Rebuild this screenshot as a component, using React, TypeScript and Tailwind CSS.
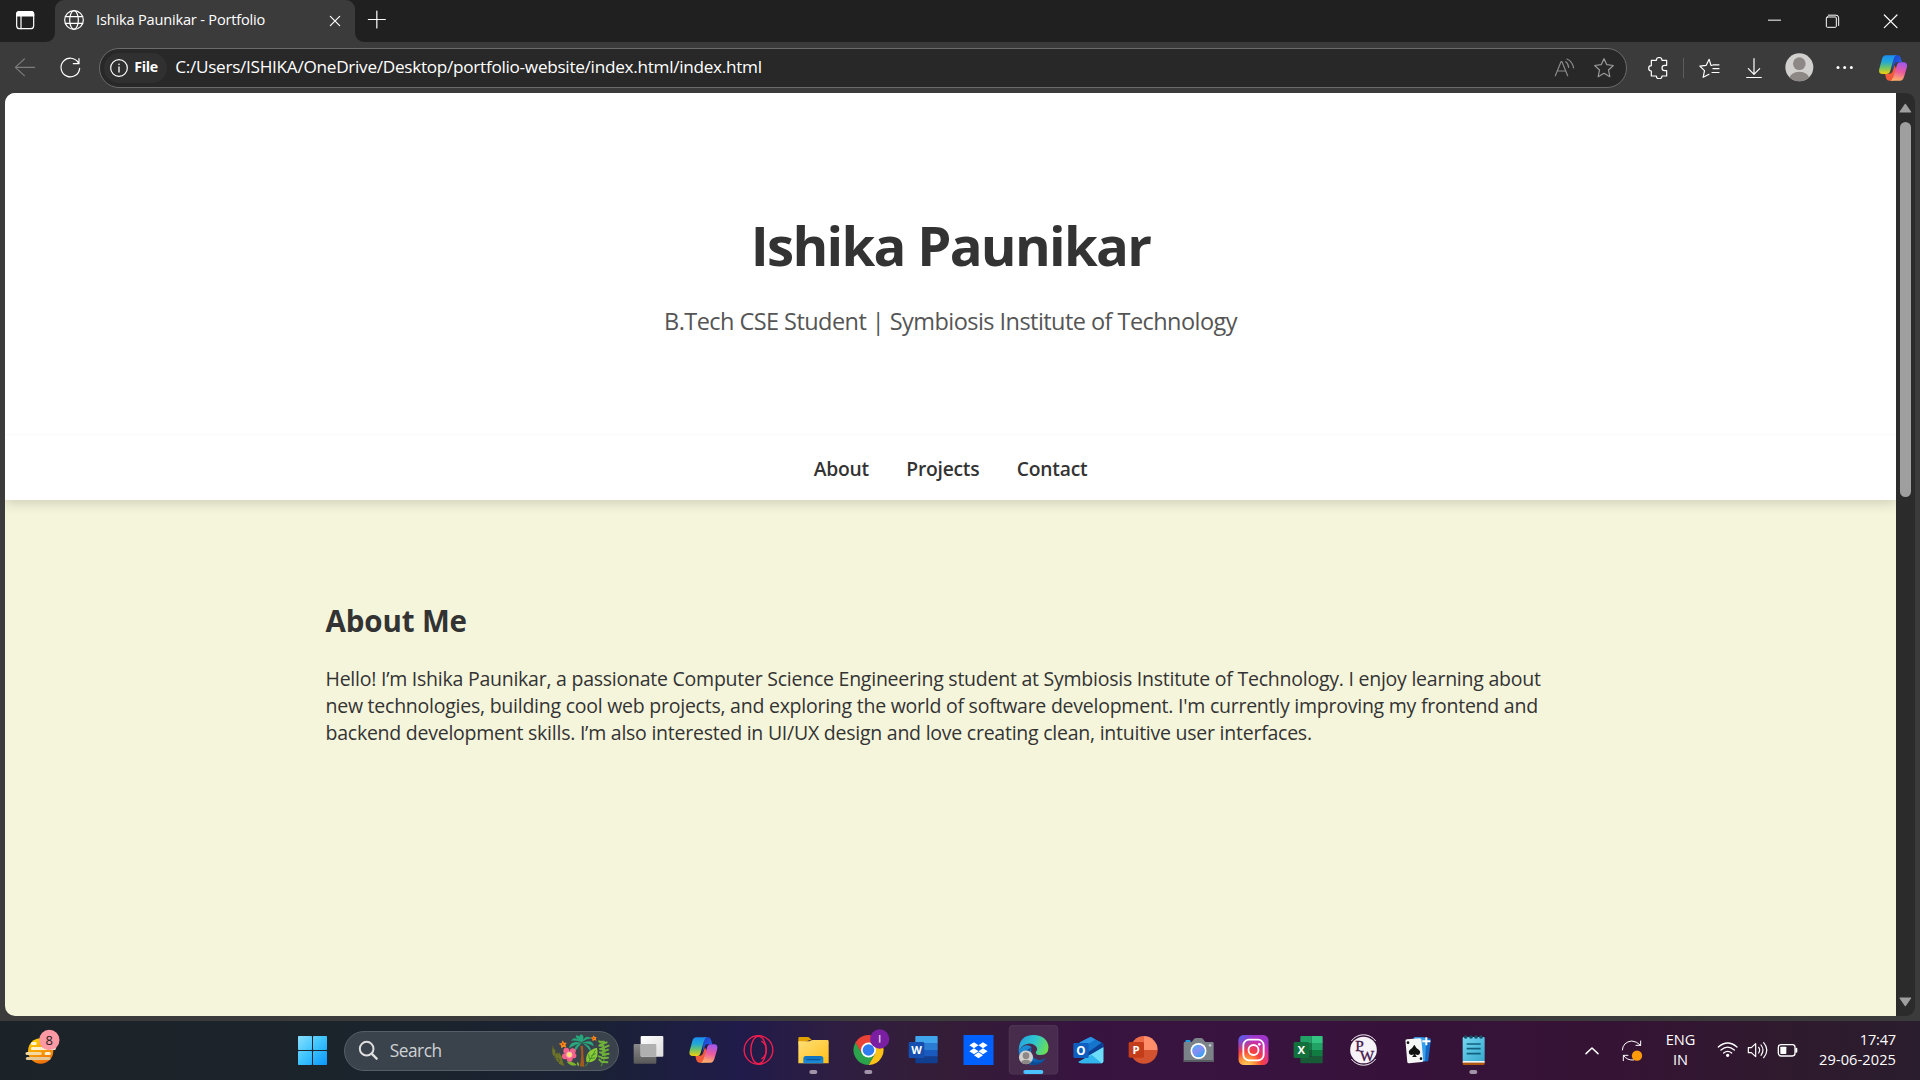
import type { ReactNode } from 'react';

const SANS = "font-['Open_Sans','Noto_Sans',sans-serif]";

/* Toolbar and tray drawings use a grid of three units per pixel. */
function Glyph({ box, className = '', children }: { box: [number, number, number, number]; className?: string; children: ReactNode }) {
  return (
    <svg
      width={box[2] / 3}
      height={box[3] / 3}
      viewBox={box.join(' ')}
      fill="none"
      stroke="currentColor"
      strokeWidth={3.6}
      strokeLinecap="round"
      strokeLinejoin="round"
      className={`shrink-0 ${className}`}
    >
      {children}
    </svg>
  );
}

function TabStrip() {
  return (
    <div className="flex h-[42px] shrink-0 bg-[#3b3b3b] text-white">
      <div className="flex w-[55px] items-center rounded-br-[9px] bg-[#202020] pl-[15px]">
        <Glyph box={[45, 30, 60, 60]} className="-mt-0.5">
          <rect x="50" y="35" width="51" height="51" rx="9" />
          <path d="M50 48V42q0-7 8-7h36q7 0 7 7v6z" fill="currentColor" />
          <path d="M63 48v38" />
        </Glyph>
      </div>
      <div className="w-[300px] bg-[#202020]">
        <div className="flex h-full items-center rounded-t-[9px] bg-[#3b3b3b] pr-[14px] pl-2">
          <Glyph box={[189, 27, 66, 66]} className="-mt-0.5">
            <circle cx="222" cy="60" r="28" />
            <ellipse cx="222" cy="60" rx="13" ry="28" />
            <path d="M196 50h52M196 70h52" />
          </Glyph>
          <span className="mt-[-3px] ml-[11px] text-[14.6px] tracking-[-0.19px]">Ishika Paunikar - Portfolio</span>
          <Glyph box={[989, 45, 36, 36]} className="ml-auto">
            <path d="M993 49l28 28M1021 49l-28 28" />
          </Glyph>
        </div>
      </div>
      <div className="flex flex-1 items-center rounded-bl-[9px] bg-[#202020] pl-3">
        <Glyph box={[1101, 30, 60, 60]} className="-mt-0.5">
          <path d="M1105 58.500h51M1130.500 33v51" />
        </Glyph>
        <Glyph box={[801, 40, 51, 50]} className="ml-auto">
          <path d="M807 61.500h39" strokeLinecap="butt" strokeWidth="3" />
        </Glyph>
        <Glyph box={[975, 40, 51, 50]} className="ml-[41px]">
          <g strokeWidth="3">
            <rect x="982" y="52" width="30" height="31" rx="3" />
            <path d="M988 46.500h23q8 0 8 8v23" />
          </g>
        </Glyph>
        <Glyph box={[1148, 40, 51, 50]} className="mr-[21px] ml-[41px]">
          <path d="M1155 46l38 38M1193 46l-38 38" strokeWidth="3.600" />
        </Glyph>
      </div>
    </div>
  );
}

function CopilotMark({ id }: { id: string }) {
  return (
    <g stroke="none">
      <defs>
        <linearGradient id={`${id}a`} x1="0" y1="0" x2="0" y2="1">
          <stop offset="0" stopColor="#1c8df0" />
          <stop offset=".35" stopColor="#22a8d8" />
          <stop offset=".65" stopColor="#6cc36b" />
          <stop offset="1" stopColor="#f3cf0c" />
        </linearGradient>
        <linearGradient id={`${id}b`} x1=".6" y1="0" x2=".4" y2="1">
          <stop offset="0" stopColor="#a156f0" />
          <stop offset=".5" stopColor="#ec5b9c" />
          <stop offset="1" stopColor="#ffb26a" />
        </linearGradient>
        <linearGradient id={`${id}c`} x1="0" y1="0" x2="1" y2="1">
          <stop offset="0" stopColor="#1b3fc9" />
          <stop offset="1" stopColor="#2b6dee" />
        </linearGradient>
      </defs>
      <path d="M44 1h12q7 0 9 7l4 14H54q-6 0-8 7l-7 20z" fill={`url(#${id}c)`} />
      <path d="M42 77H30q-7 0-9-8l-3-13h14q7 0 9-7l6-18 9 24z" fill="#f25b3a" />
      <path d="M21 1h32q-6 1-9 11L34 47q-3 10-12 10H11Q-3 57 1 41L9 12Q12 1 21 1z" fill={`url(#${id}a)`} />
      <path d="M63 77H33q7-1 10-11l10-34q3-10 12-10h9q14 0 9 17l-8 27q-3 11-12 11z" fill={`url(#${id}b)`} />
    </g>
  );
}

function Toolbar() {
  return (
    <div className="flex h-[51px] shrink-0 items-center bg-[#3b3b3b] text-white">
      <Glyph box={[42, 172, 66, 62]} className="ml-[14px] text-[#7c7c7c]">
        <path d="M104 203H47M73 178l-27 25 27 25" />
      </Glyph>
      <Glyph box={[176, 170, 68, 68]} className="mt-px ml-[22.500px]">
        <path d="M234 187A28 28 0 1 0 238 204M236 175v15h-17" />
      </Glyph>
      <div className="ml-[18px] flex h-[40px] w-[1528px] items-center rounded-full border border-[#6b6b6b] bg-[#282828] pl-1">
        <div className="flex h-[30px] w-[63px] items-center rounded-full bg-[#303030] pl-[5px]">
          <Glyph box={[329, 174, 60, 60]}>
            <circle cx="359" cy="204" r="25" />
            <path d="M359 201v15" strokeWidth="4" />
            <circle cx="359" cy="193" r="2.500" fill="currentColor" stroke="none" />
          </Glyph>
          <span className="-mt-px ml-[5px] text-[14.2px] font-bold tracking-[-0.300px]">File</span>
        </div>
        <span className="mt-[-1px] ml-2 text-[17.200px] tracking-[-0.290px] whitespace-nowrap">
          C:/Users/ISHIKA/OneDrive/Desktop/portfolio-website/index.html/index.html
        </span>
        <Glyph box={[165, 170, 63, 63]} className="ml-auto text-[#8a8a8a]">
          <path d="M169 226l17-42h3l17 42M175 212h24" />
          <path d="M200 184q8 5 9 17M204 176q16 7 20 27" />
        </Glyph>
        <Glyph box={[282, 173, 66, 66]} className="mr-[11px] ml-[18px] text-[#9a9a9a]">
          <path d="M315 178l8.500 18 19.500 2.500-14.500 13.500 4 20-17.500-10-17.500 10 4-20-14.500-13.500 19.500-2.500z" />
        </Glyph>
      </div>
      <Glyph box={[447, 171, 66, 66]} className="ml-[21px]">
        <path d="M457 181h15a8.500 8.500 0 0 1 17 0h14v15h-6a8 8 0 0 0 0 16h6v16h-14a8.500 8.500 0 0 1-17 0h-15v-15a8 8 0 0 1 0-16z" />
      </Glyph>
      <div className="ml-[13px] h-5 w-px bg-[#5c5c5c]" />
      <Glyph box={[596, 171, 69, 66]} className="ml-[14px]">
        <path d="M635 196l-5.500-18-9 18-19 2.500 14 13.500-4 20 17.500-9M635 196h3M641 194.500h18M641 206h18M638 217.500h21" />
      </Glyph>
      <Glyph box={[738, 171, 54, 66]} className="ml-[24px]">
        <path d="M765 176v46M748 206l17 17 17-17M743 232.500h44" />
      </Glyph>
      <Glyph box={[857, 161, 86, 86]} className="ml-[22px]">
        <g stroke="none">
          <clipPath id="avatar">
            <circle cx="900" cy="204" r="42" />
          </clipPath>
          <circle cx="900" cy="204" r="42" fill="#d2d0ce" />
          <g clipPath="url(#avatar)" fill="#8d8885">
            <circle cx="900" cy="193" r="19" />
            <ellipse cx="900" cy="240" rx="31" ry="23" />
          </g>
        </g>
      </Glyph>
      <Glyph box={[1008, 190, 54, 27]} className="ml-[22px]">
        <g fill="currentColor" stroke="none">
          <circle cx="1014" cy="203.500" r="4.500" />
          <circle cx="1034" cy="203.500" r="4.500" />
          <circle cx="1054" cy="203.500" r="4.500" />
        </g>
      </Glyph>
      <Glyph box={[0, 0, 86, 78]} className="ml-[25px]">
        <CopilotMark id="bar" />
      </Glyph>
    </div>
  );
}

function Page() {
  return (
    <div className="flex h-[928px] shrink-0 bg-[#3b3b3b] pr-[5px] pl-[5px]">
      <div className="flex h-[923px] w-[1891px] flex-col overflow-hidden rounded-l-[10px] bg-[#f5f5dc] text-[#333]">
        <header className="relative z-10 flex h-[341px] shrink-0 flex-col items-center bg-white pt-[114px]">
          <h1 className="text-[54.500px] leading-[76px] font-bold tracking-[-1.720px]">Ishika Paunikar</h1>
          <p className="mt-[21px] text-[23.500px] leading-[34px] tracking-[-0.550px] text-[#555]">
            B.Tech CSE Student | Symbiosis Institute of Technology
          </p>
        </header>
        <nav className="relative flex h-[66px] shrink-0 items-center justify-center gap-[37.500px] border-t border-[#fafafa] bg-white pt-[3px] text-[19.300px] font-semibold tracking-[-0.250px] shadow-[0_3px_12px_rgba(0,0,0,0.16)]">
          <a>About</a>
          <a>Projects</a>
          <a>Contact</a>
        </nav>
        <section className="ml-[320.500px] pt-[101px]">
          <h2 className="text-[29.500px] leading-[40px] font-bold tracking-[-0.120px]">About Me</h2>
          <p className="mt-[24px] text-[19.500px] leading-[27px] tracking-[-0.242px] whitespace-nowrap">
            Hello! I’m Ishika Paunikar, a passionate Computer Science Engineering student at Symbiosis Institute of Technology. I enjoy learning about
            <br />
            new technologies, building cool web projects, and exploring the world of software development. I'm currently improving my frontend and
            <br />
            backend development skills. I’m also interested in UI/UX design and love creating clean, intuitive user interfaces.
          </p>
        </section>
      </div>
      <div className="flex h-[923px] w-[19px] flex-col items-center rounded-r-[9px] bg-[#2b2b2b] pt-[10px] pb-[9px]">
        <Glyph box={[0, 0, 38, 30]} className="text-[#9f9f9f]">
          <path d="M19 4L35 27H3z" fill="currentColor" />
        </Glyph>
        <div className="mt-[9px] h-[375px] w-[11px] rounded-full bg-[#9f9f9f]" />
        <Glyph box={[0, 0, 38, 30]} className="mt-auto text-[#9f9f9f]">
          <path d="M19 26L35 3H3z" fill="currentColor" />
        </Glyph>
      </div>
    </div>
  );
}

/* One taskbar slot: 165 x 177 units, icon centred on (82.5, 87). */
function Slot({ active, running, children }: { active?: boolean; running?: boolean; children: ReactNode }) {
  return (
    <svg width="55" height="59" viewBox="0 0 165 177" className={`shrink-0 ${SANS}`}>
      {active && <rect x="9" y="13" width="147" height="147" rx="12" fill="#fff" fillOpacity=".09" stroke="#fff" strokeOpacity=".1" strokeWidth="2" />}
      {children}
      {active && <rect x="52" y="147" width="60" height="12" rx="6" fill="#4cc2ff" />}
      {running && <rect x="70" y="147" width="24" height="12" rx="6" fill="#a193a8" />}
    </svg>
  );
}

function StartIcon() {
  return (
    <Slot>
      <defs>
        <linearGradient id="win" gradientUnits="userSpaceOnUse" x1="38" y1="44" x2="126" y2="132">
          <stop offset="0" stopColor="#8be0ff" />
          <stop offset=".5" stopColor="#3cc3fd" />
          <stop offset="1" stopColor="#0a95fb" />
        </linearGradient>
      </defs>
      <g fill="url(#win)">
        <rect x="39" y="45" width="42" height="42" rx="2" />
        <rect x="84" y="45" width="42" height="42" rx="2" />
        <rect x="39" y="90" width="42" height="42" rx="2" />
        <rect x="84" y="90" width="42" height="42" rx="2" />
      </g>
    </Slot>
  );
}

function SearchPill() {
  return (
    <div className="flex h-10 w-[275px] items-center rounded-full border border-[#555e67] bg-[#3a424b] pl-[13px]">
      <Glyph box={[234, 90, 62, 62]} className="text-[#dedede]">
        <g strokeWidth="6">
          <circle cx="260" cy="116" r="20.500" />
          <path d="M275 131l15 15" strokeWidth="7" />
        </g>
      </Glyph>
      <span className="mt-px ml-[11px] text-[17.300px] tracking-[-0.450px] text-[#cfd2d5]">Search</span>
      <svg width="60" height="34" viewBox="812 70 180 102" className="mb-px mr-2 ml-auto">
        <g strokeLinecap="round" fill="none">
          <path d="M820 110q6 40 34 58" stroke="#5c5a22" strokeWidth="4" />
          <path d="M820 114q-4 18 4 26l10-12zM828 120l14 22-14 6zM838 126l12 18-12 14zM822 140l14 18 8-6zM846 138l8 30-16-6z" fill="#6d7427" />
          <path d="M958 92q34 30 8 76" stroke="#4f8a2c" strokeWidth="4" />
          <path d="M960 96h14M962 106l20-8M968 116l20-8M970 126l16-6M970 136l18-4M968 146l18-2M966 156l18 2M972 108l-12 0M974 120l-12-2M974 132l-12-4M970 144l-12-4M966 156l-6-6" stroke="#71b33a" strokeWidth="6" />
        </g>
        <path d="M903 108q6 30-2 62l14 1q-3-32-4-62z" fill="#a05a20" />
        <g fill="#27a77c">
          <path d="M907 98q-20-22-32-5 18-2 32 5z" />
          <path d="M907 100q-34-10-38 16 18-12 38-16z" />
          <path d="M907 100q-26 6-20 26 8-14 20-26z" />
          <path d="M907 100q-14-28 2-25 8 8-2 25z" />
          <path d="M907 98q12-26 30-12-16 2-30 12z" />
          <path d="M907 100q34-14 36 10-16-10-36-10z" />
          <path d="M907 100q32 6 26 26-10-18-26-26z" />
          <path d="M907 98q-26-20-14-21 12 2 14 21z" />
        </g>
        <path d="M921 156q-4-34 32-42 8 38-22 44z" fill="#8ccb35" />
        <path d="M918 170q14-16 30-48M930 148l18-4M936 138l14-6M930 148l-2-14" stroke="#3f8f2e" strokeWidth="3" fill="none" />
        <path d="M862 156q14-4 30 10-16 6-30-10zM894 156q8 6 4 14-8-6-4-14z" fill="#7fb32e" />
        <g fill="#f4628b">
          <ellipse cx="861" cy="123" rx="9" ry="9" />
          <ellipse cx="880" cy="125" rx="9" ry="9" />
          <ellipse cx="857" cy="140" rx="9" ry="9" />
          <ellipse cx="871" cy="147" rx="9" ry="9" />
          <ellipse cx="883" cy="138" rx="8" ry="8" />
        </g>
        <circle cx="870" cy="135" r="8" fill="#ffe36b" stroke="#ffb3c6" strokeWidth="3" />
        <g fill="#ff8f1c">
          <path d="M850 92l4 7 8 0-4 7 3 8-8-3-7 5-1-9-7-5 9-2z" />
          <path d="M943 77l3 5 6 0-3 5 3 6-7-2-5 4-1-7-6-4 7-1z" />
        </g>
        <circle cx="850" cy="104" r="3" fill="#c8430b" />
        <circle cx="943" cy="86" r="2.500" fill="#c8430b" />
      </svg>
    </div>
  );
}

function TaskViewIcon() {
  return (
    <Slot>
      <defs>
        <linearGradient id="tv1" x1="0" y1="0" x2="1" y2="1">
          <stop offset="0" stopColor="#fff" />
          <stop offset="1" stopColor="#dcdcdc" />
        </linearGradient>
        <linearGradient id="tv2" x1="0" y1="0" x2="0" y2="1">
          <stop offset="0" stopColor="#8a8a8a" />
          <stop offset="1" stopColor="#585858" />
        </linearGradient>
      </defs>
      <rect x="38" y="69" width="68" height="59" rx="3" fill="url(#tv2)" />
      <rect x="59" y="45" width="68" height="62" rx="3" fill="url(#tv1)" />
      <path d="M59 69h44q3 0 3 3v35H62q-3 0-3-3z" fill="#b0b0b0" />
    </Slot>
  );
}

function CopilotIcon() {
  return (
    <Slot>
      <g transform="translate(40 48)">
        <CopilotMark id="task" />
      </g>
    </Slot>
  );
}

function OperaIcon() {
  return (
    <Slot>
      <g fill="none" stroke="#fa1e4e" strokeWidth="4">
        <circle cx="82.500" cy="87" r="43" />
        <ellipse cx="82.500" cy="87" rx="23" ry="41" />
        <path d="M91 60q15 9 15 27t-15 27" strokeWidth="3.500" />
      </g>
    </Slot>
  );
}

function FolderIcon() {
  return (
    <Slot running>
      <defs>
        <linearGradient id="fold" x1="0" y1="0" x2="1" y2="1">
          <stop offset="0" stopColor="#ffe079" />
          <stop offset="1" stopColor="#ffbe18" />
        </linearGradient>
        <linearGradient id="foldb" x1="0" y1="0" x2="0" y2="1">
          <stop offset="0" stopColor="#0f6fbd" />
          <stop offset="1" stopColor="#1c8fdd" />
        </linearGradient>
      </defs>
      <path d="M37 52q0-4 4-4h24q4 0 6 3l7 7h-8l-33 12z" fill="#e0a100" />
      <path d="M37 61h30q4 0 7-2 3-2 7-2h43q4 0 4 4v66H37z" fill="url(#fold)" />
      <path d="M52 127v-14q0-8 8-8h44q8 0 8 8v14z" fill="url(#foldb)" />
      <path d="M62 116h40" stroke="#0a4c8b" strokeWidth="3" />
    </Slot>
  );
}

function ChromeIcon() {
  return (
    <Slot running>
      <path d="M82.500 87L43.500 64.500A45 45 0 0 1 121.500 64.500H82.500z" fill="#ea4335" />
      <path d="M82.500 87L121.500 64.500H82.500L102 98.300 82.500 132A45 45 0 0 0 121.500 64.500z" fill="#fbc116" />
      <path d="M43.500 64.500A45 45 0 0 0 82.500 132L102 98.300 82.500 87 63 98.300z" fill="#2ba24c" />
      <path d="M43.500 64.500L63 98.300 82.500 64.500z" fill="#2ba24c" />
      <path d="M43.500 64.500L60 93 82.500 64.500 82.500 50z" fill="#ea4335" />
      <circle cx="82.500" cy="87" r="22.500" fill="#fff" />
      <circle cx="82.500" cy="87" r="17.500" fill="#2f7bf0" />
      <circle cx="116" cy="54" r="29" fill="#7b1fa2" />
      <path d="M116 42v23" stroke="#d9b5e6" strokeWidth="5" />
    </Slot>
  );
}

function Letter({ x, y, size, children, fill = '#fff' }: { x: number; y: number; size: number; children: ReactNode; fill?: string }) {
  return (
    <text x={x} y={y} fontSize={size} fontWeight="700" textAnchor="middle" fill={fill}>
      {children}
    </text>
  );
}

function WordIcon() {
  return (
    <Slot>
      <path d="M58 48q0-3 3-3h61q3 0 3 3v18H58z" fill="#41a5ee" />
      <path d="M58 66h67v21H58z" fill="#2b7cd3" />
      <path d="M58 87h67v20H58z" fill="#185abd" />
      <path d="M58 107h67v17q0 3-3 3H61q-3 0-3-3z" fill="#103f91" />
      <rect x="38" y="63" width="47" height="48" rx="4" fill="#164fb0" />
      <Letter x={61.500} y={98} size={33}>W</Letter>
    </Slot>
  );
}

function DropboxIcon() {
  return (
    <Slot>
      <rect x="37.500" y="42" width="90" height="90" fill="#0061fe" />
      <g fill="#fff">
        <path d="M69 64l13.500 9-13.500 9-14-9zM96 64l14 9-14 9-13.500-9zM69 82l13.500 9-13.500 9-14-9zM96 82l14 9-14 9-13.500-9zM82.500 94l13.500 8.500-13.500 9-13.500-9z" />
      </g>
    </Slot>
  );
}

function EdgeIcon() {
  return (
    <Slot active>
      <defs>
        <linearGradient id="edA" x1="0" y1=".3" x2="1" y2=".6">
          <stop offset="0" stopColor="#25a5e0" />
          <stop offset=".5" stopColor="#2fc6cf" />
          <stop offset="1" stopColor="#6cdf4e" />
        </linearGradient>
        <linearGradient id="edB" x1="0" y1="0" x2=".6" y2="1">
          <stop offset="0" stopColor="#1e9ae0" />
          <stop offset="1" stopColor="#0d57a8" />
        </linearGradient>
      </defs>
      <path d="M38 87A45 45 0 0 0 82 132q24 0 38-21-12 8-25 5-24-6-19-38-16-14-38 9z" fill="url(#edB)" />
      <path d="M76 80q-14 20 2 40 14 12 38-4-14 17-34 16-24-4-26-26-1-18 20-26z" fill="#0c4a92" />
      <path d="M38 87q2-45 45-45 42 2 44.500 37 0 23-23 23-15 0-15-7 0-3 4-8 1-12-14-18-22-6-41.500 18z" fill="url(#edA)" />
      <clipPath id="edC">
        <circle cx="60" cy="109" r="21" />
      </clipPath>
      <g clipPath="url(#edC)">
        <rect x="39" y="88" width="42" height="42" fill="#d2d0ce" />
        <circle cx="60" cy="104" r="10" fill="#8d8885" />
        <ellipse cx="60" cy="127" rx="16" ry="11" fill="#8d8885" />
      </g>
    </Slot>
  );
}

function OutlookIcon() {
  return (
    <Slot>
      <path d="M50 68l36-19q3-2 6 0l33 18q2 1 2 4v20H50z" fill="#0f5fb5" />
      <path d="M56 64l30-15q3-2 6 0l12 7-50 30z" fill="#2b93e6" />
      <path d="M104 56l18 9-52 38-16-17z" fill="#1575cd" />
      <path d="M122 65q5 3 5 6v8L82 108l-12-6z" fill="#0c3f94" />
      <path d="M127 79v42q0 6-6 6H62q-6 0-10-4l25-14z" fill="#39c4f3" />
      <path d="M127 79v42q0 6-6 6L80 106z" fill="#6ddcf8" />
      <path d="M52 123l40-22 30 26H62z" fill="#32b4ec" />
      <rect x="37" y="66" width="46" height="45" rx="4" fill="#0f5fc0" />
      <Letter x={60} y={101} size={35}>O</Letter>
    </Slot>
  );
}

function PowerPointIcon() {
  return (
    <Slot>
      <path d="M84 87V45a41.500 41.500 0 0 0-41 42z" fill="#ed6c47" />
      <path d="M84 87V45a41.500 41.500 0 0 1 41 42z" fill="#ff8f6b" />
      <path d="M43 87h82a41 41 0 0 1-82 0z" fill="#d35230" />
      <rect x="38" y="63" width="46" height="47" rx="4" fill="#c33d1b" />
      <Letter x={60} y={99} size={34}>P</Letter>
    </Slot>
  );
}

function CameraIcon() {
  return (
    <Slot>
      <defs>
        <linearGradient id="lens" x1="0" y1="0" x2=".7" y2="1">
          <stop offset="0" stopColor="#37b6f3" />
          <stop offset=".5" stopColor="#8a8cf5" />
          <stop offset="1" stopColor="#30a5f0" />
        </linearGradient>
      </defs>
      <rect x="43" y="57" width="16" height="10" rx="4" fill="#1c9de0" />
      <path d="M38 67q0-4 4-4h20l7-9q3-3 6-3h15q4 0 6 3l7 9h21q4 0 4 4v56H38z" fill="#7c8388" />
      <path d="M38 117h90v3q0 3-3 3H41q-3 0-3-3z" fill="#575d62" />
      <circle cx="82.500" cy="90" r="24" fill="#fff" />
      <circle cx="82.500" cy="90" r="19" fill="url(#lens)" />
      <path d="M117 69v8M113 73h8" stroke="#d4dde5" strokeWidth="3" />
    </Slot>
  );
}

function InstagramIcon() {
  return (
    <Slot>
      <defs>
        <radialGradient id="igA" cx=".27" cy="1.05" r="1.05">
          <stop offset="0" stopColor="#ffd866" />
          <stop offset=".25" stopColor="#ff9a3c" />
          <stop offset=".5" stopColor="#f9403f" />
          <stop offset=".85" stopColor="#c82fb3" />
          <stop offset="1" stopColor="#a035c9" />
        </radialGradient>
        <radialGradient id="igB" cx="0" cy="0" r=".6">
          <stop offset="0" stopColor="#3b6cf0" />
          <stop offset="1" stopColor="#6a4be0" stopOpacity="0" />
        </radialGradient>
      </defs>
      <rect x="37.500" y="42" width="90" height="90" rx="16" fill="url(#igA)" />
      <rect x="37.500" y="42" width="90" height="90" rx="16" fill="url(#igB)" />
      <g fill="none" stroke="#fff" strokeWidth="5.500">
        <rect x="52" y="56" width="61" height="62" rx="17" />
        <circle cx="82.500" cy="87" r="15" />
      </g>
      <circle cx="100" cy="70" r="4" fill="#fff" />
    </Slot>
  );
}

function ExcelIcon() {
  return (
    <Slot>
      <path d="M58 48q0-3 3-3h31v21H58z" fill="#21a366" />
      <path d="M92 45h30q3 0 3 3v18H92z" fill="#33c481" />
      <path d="M58 66h34v21H58z" fill="#107c41" />
      <path d="M92 66h33v21H92z" fill="#21a366" />
      <path d="M58 87h34v20H58z" fill="#185c37" />
      <path d="M92 87h33v20H92z" fill="#107c41" />
      <path d="M58 107h67v17q0 3-3 3H61q-3 0-3-3z" fill="#185c37" />
      <rect x="38" y="63" width="46" height="48" rx="4" fill="#12703d" />
      <Letter x={60.500} y={99} size={34}>X</Letter>
    </Slot>
  );
}

function PwIcon() {
  return (
    <Slot>
      <circle cx="82.500" cy="87" r="40" fill="#f6f2f7" />
      <path d="M46 60a45 45 0 0 1 73 0M119 114a45 45 0 0 1-73 0" fill="none" stroke="#f6f2f7" strokeWidth="3" />
      <g fontFamily="Liberation Serif, serif" fill="#45184a" stroke="#45184a">
        <text x="58" y="89" fontSize="46">P</text>
        <text x="71" y="119" fontSize="46">W</text>
      </g>
    </Slot>
  );
}

function CardsIcon() {
  return (
    <Slot>
      <rect x="78" y="50" width="38" height="70" rx="5" fill="#1469c4" transform="rotate(7 97 85)" />
      <rect x="66" y="49" width="38" height="72" rx="5" fill="#35a0ee" transform="rotate(3 85 85)" />
      <rect x="46" y="53" width="48" height="72" rx="5" fill="#f6f6f6" transform="rotate(-5 70 89)" />
      <path d="M70 71q5 11 15 17 5 5 1 11-6 6-13 0 1 6 5 9H63q5-3 5-9-6 6-13 0-4-7 1-12 9-6 14-16z" fill="#111" />
      <circle cx="51" cy="65" r="4" fill="#111" />
      <circle cx="90" cy="113" r="4" fill="#111" />
      <path d="M106 49v24M94 61h24" stroke="#fff" strokeWidth="6" />
    </Slot>
  );
}

function NotepadIcon() {
  return (
    <Slot running>
      <defs>
        <linearGradient id="note" x1="0" y1="0" x2="1" y2="1">
          <stop offset="0" stopColor="#74d7f0" />
          <stop offset="1" stopColor="#37a9cf" />
        </linearGradient>
      </defs>
      <path d="M50 124h66v4q0 4-4 4H54q-4 0-4-4z" fill="#b0570d" />
      <path d="M50 119h66v6H50z" fill="#f3f3f3" />
      <rect x="50" y="48" width="66" height="72" rx="3" fill="url(#note)" />
      <path d="M62 69h42M62 83h42M62 98h42" stroke="#11617f" strokeWidth="5" />
      <g fill="#174f66">
        <circle cx="59" cy="48" r="5.500" />
        <circle cx="75" cy="48" r="5.500" />
        <circle cx="90" cy="48" r="5.500" />
        <circle cx="105" cy="48" r="5.500" />
      </g>
    </Slot>
  );
}

function WidgetsIcon() {
  return (
    <svg width="36" height="36" viewBox="76 84 108 108" className="mb-[7px] ml-[25px] shrink-0">
      <defs>
        <linearGradient id="sun" x1=".2" y1="0" x2=".6" y2="1">
          <stop offset="0" stopColor="#ffd400" />
          <stop offset="1" stopColor="#ef6e0c" />
        </linearGradient>
      </defs>
      <circle cx="123" cy="150" r="38" fill="url(#sun)" />
      <g strokeLinecap="round" strokeWidth="9">
        <path d="M98 127.500h9M98 142.500h42M139 157.500h10" stroke="#fff1cf" />
        <path d="M82 157.500h40" stroke="#f5d9a0" />
        <path d="M83 172.500h65" stroke="#e6c896" />
        <path d="M150 142.500h14" stroke="#f3ead8" />
      </g>
      <circle cx="149" cy="117" r="30.500" fill="#ff99a4" />
      <text x="148.500" y="131" fontSize="39" textAnchor="middle" fill="#1b1b1b">
        8
      </text>
    </svg>
  );
}

function Tray() {
  return (
    <div className="ml-auto flex items-center text-white">
      <Glyph box={[75, 190, 50, 40]}>
        <path d="M81 219l18-17 18 17" strokeWidth="4.500" />
      </Glyph>
      <Glyph box={[186, 175, 66, 70]} className="ml-[20.500px]">
        <path d="M190 208q2-24 28-27 14 0 27 13M245 181v13h-14M224 238q-20 2-31-14M193 240v-16h14" strokeWidth="3" />
        <circle cx="234" cy="225" r="15.500" fill="#ff9a0a" stroke="none" />
      </Glyph>
      <div className="mt-[-3px] ml-[22px] flex w-[30px] flex-col items-center text-[14.600px] leading-5">
        <span>ENG</span>
        <span>IN</span>
      </div>
      <Glyph box={[472, 180, 64, 60]} className="mb-[2px] ml-[21.700px]">
        <g strokeWidth="4">
          <path d="M476 201q28-24 56 0M484 210q20-17 40 0M492 219q12-10 24 0" />
          <circle cx="504" cy="226" r="3" fill="currentColor" />
        </g>
      </Glyph>
      <Glyph box={[562, 180, 66, 60]} className="mb-[2px] ml-[8.500px]">
        <path d="M566 203h9l13-12v39l-13-12h-9zM597 202q6 8 0 17M604 195q12 15 0 31M612 188q19 22 0 45" />
      </Glyph>
      <Glyph box={[652, 180, 66, 60]} className="mb-[2px] ml-[8px]">
        <rect x="656" y="194" width="50" height="34" rx="8" strokeWidth="4" />
        <rect x="662" y="200" width="18" height="22" rx="2" fill="currentColor" stroke="none" />
        <path d="M710 206v9" strokeWidth="6" />
      </Glyph>
      <div className="mt-[-4px] mr-[24px] ml-[16px] flex w-[81px] flex-col items-end text-[14.600px] leading-5">
        <span className="tracking-[-0.200px]">17:47</span>
        <span className="tracking-[0.080px]">29-06-2025</span>
      </div>
    </div>
  );
}

function Taskbar() {
  return (
    <div className="flex h-[59px] shrink-0 items-center bg-[linear-gradient(90deg,#1c2328_0px,#1b232c_420px,#1a2135_600px,#201b4a_740px,#301e40_850px,#341d37_940px,#37143f_1080px,#38133f_1250px,#36123a_1400px,#351334_1620px,#2f1a2e_1780px,#2a1d2d_1920px)]">
      <WidgetsIcon />
      <div className="ml-[224px] flex items-center">
        <StartIcon />
        <div className="mr-[2px] ml-[4px]">
          <SearchPill />
        </div>
        <TaskViewIcon />
        <CopilotIcon />
        <OperaIcon />
        <FolderIcon />
        <ChromeIcon />
        <WordIcon />
        <DropboxIcon />
        <EdgeIcon />
        <OutlookIcon />
        <PowerPointIcon />
        <CameraIcon />
        <InstagramIcon />
        <ExcelIcon />
        <PwIcon />
        <CardsIcon />
        <NotepadIcon />
      </div>
      <Tray />
    </div>
  );
}

export default function App() {
  return (
    <div className={`flex h-[1080px] w-[1920px] flex-col overflow-hidden bg-[#3b3b3b] ${SANS}`}>
      <TabStrip />
      <Toolbar />
      <Page />
      <Taskbar />
    </div>
  );
}
